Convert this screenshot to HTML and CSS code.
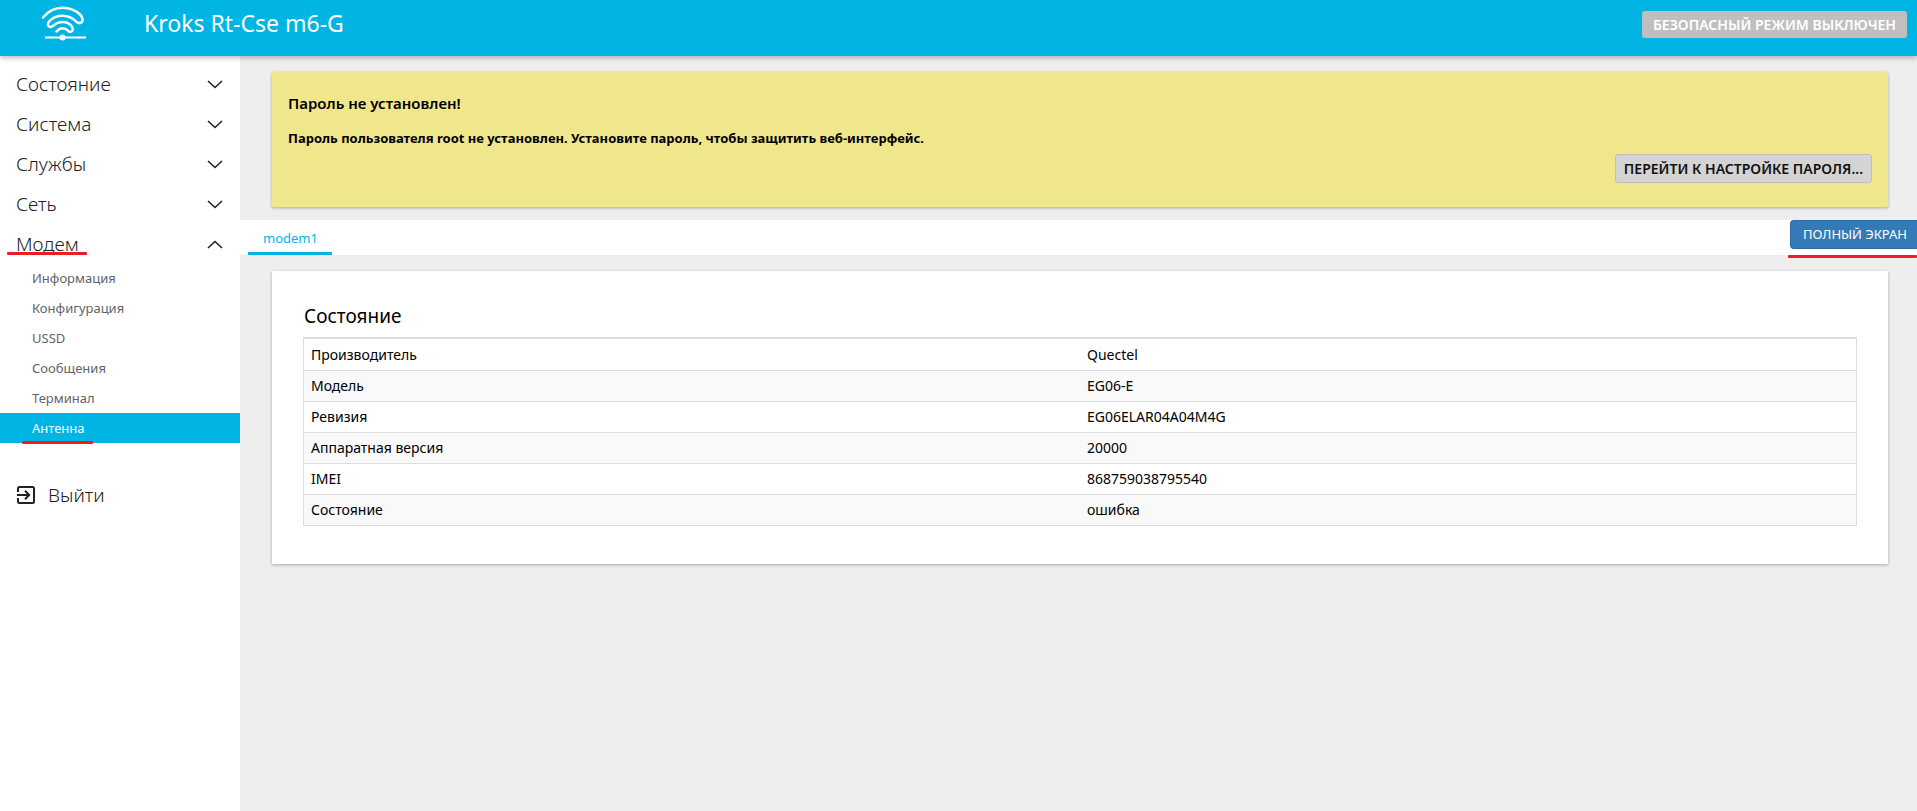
FILE: index.html
```html
<!DOCTYPE html>
<html lang="ru">
<head>
<meta charset="utf-8">
<title>Kroks Rt-Cse m6-G — Антенна</title>
<link rel="stylesheet" href="styles.css">
</head>
<body>
<svg class="sprite" aria-hidden="true">
  <symbol id="chevron" viewBox="0 0 16 9"><path d="M1 1l7 6.500 7-6.500" fill="none" stroke="currentColor" stroke-width="1.600"/></symbol>
</svg>
<header class="header">
  <svg class="logo" viewBox="0 0 46 36" aria-hidden="true">
    <path d="M2 11.500C7.500 5 14 1.800 21.500 1.800c7.500 0 13.500 2.700 18 7.200 2.500 2.600 2.800 5.800.800 7.400-1.500 1.200-3.300.800-5-.700C31.500 12 27 9.800 21.500 9.800c-5.500 0-10 2-13 5.200-2 2.200-2 4.500-.500 5.500 1.500 1 3 .300 4.500-.900 2.500-2.300 5.500-3.600 9-3.600 4 0 7.300 1.600 9.200 4.300 1.600 2.400 1.300 4.700-.500 5.400-1.300.500-2.500 0-3.500-1.300-1.400-1.500-3-2.200-5.200-2.200-2.400 0-4.300 1.100-6 3.300" fill="none" stroke="#fff" stroke-width="2.500" stroke-linecap="round" stroke-linejoin="round"/>
    <path d="M4 31.500h41" fill="none" stroke="#fff" stroke-width="2.200"/>
    <circle cx="21.500" cy="31.500" r="3" fill="#fff"/>
  </svg>
  <h1 class="title">Kroks Rt-Cse m6-G</h1>
  <button class="btn btn-safe" type="button">БЕЗОПАСНЫЙ РЕЖИМ ВЫКЛЮЧЕН</button>
</header>
<div class="layout">
  <nav class="sidebar">
    <ul class="menu">
      <li><a class="menu-link" href="#status">Состояние<svg class="chevron"><use href="#chevron"/></svg></a></li>
      <li><a class="menu-link" href="#system">Система<svg class="chevron"><use href="#chevron"/></svg></a></li>
      <li><a class="menu-link" href="#services">Службы<svg class="chevron"><use href="#chevron"/></svg></a></li>
      <li><a class="menu-link" href="#network">Сеть<svg class="chevron"><use href="#chevron"/></svg></a></li>
      <li>
        <a class="menu-link mark mark-modem" href="#modem">Модем<svg class="chevron chevron-open"><use href="#chevron"/></svg></a>
        <ul class="submenu">
          <li><a class="sub-link" href="#info">Информация</a></li>
          <li><a class="sub-link" href="#config">Конфигурация</a></li>
          <li><a class="sub-link" href="#ussd">USSD</a></li>
          <li><a class="sub-link" href="#sms">Сообщения</a></li>
          <li><a class="sub-link" href="#terminal">Терминал</a></li>
          <li><a class="sub-link active mark mark-antenna" href="#antenna">Антенна</a></li>
        </ul>
      </li>
    </ul>
    <a class="logout" href="#logout">
      <svg class="logout-icon" viewBox="0 0 18 18" aria-hidden="true"><path d="M1 6V2.500Q1 1 2.500 1h13Q17 1 17 2.500v13q0 1.500-1.500 1.500h-13Q1 17 1 15.500V12M0 9h12M8 4.800L12.200 9 8 13.200" fill="none" stroke="currentColor" stroke-width="2"/></svg>
      Выйти
    </a>
  </nav>
  <main class="content">
    <section class="alert">
      <h2 class="alert-title">Пароль не установлен!</h2>
      <p class="alert-text">Пароль пользователя root не установлен. Установите пароль, чтобы защитить веб-интерфейс.</p>
      <button class="btn btn-alert" type="button">ПЕРЕЙТИ К НАСТРОЙКЕ ПАРОЛЯ...</button>
    </section>
    <div class="tabs">
      <a class="tab" href="#modem1">modem1</a>
      <div class="mark mark-full"><button class="btn btn-full" type="button">ПОЛНЫЙ ЭКРАН</button></div>
    </div>
    <section class="card">
      <h2 class="card-title">Состояние</h2>
      <table class="table">
        <tbody>
          <tr><th scope="row">Производитель</th><td>Quectel</td></tr>
          <tr><th scope="row">Модель</th><td>EG06-E</td></tr>
          <tr><th scope="row">Ревизия</th><td>EG06ELAR04A04M4G</td></tr>
          <tr><th scope="row">Аппаратная версия</th><td>20000</td></tr>
          <tr><th scope="row">IMEI</th><td>868759038795540</td></tr>
          <tr><th scope="row">Состояние</th><td>ошибка</td></tr>
        </tbody>
      </table>
    </section>
  </main>
</div>
</body>
</html>
```

FILE: styles.css
```css
* { box-sizing: border-box; }

body {
  margin: 0;
  min-height: 100vh;
  display: flex;
  flex-direction: column;
  overflow-x: hidden;
  background: #eee;
  color: #000;
  font: 14px/20px "Noto Sans", "Open Sans", sans-serif;
}

a { text-decoration: none; }
ul { margin: 0; padding: 0; list-style: none; }
h1, h2, p { margin: 0; }
.sprite { display: none; }

.header {
  position: relative;
  z-index: 1;
  display: flex;
  align-items: flex-start;
  height: 56px;
  padding: 0 10px 0 41px;
  background: #00b5e4;
  box-shadow: 0 2px 5px rgba(0, 0, 0, .26);
}
.logo { width: 46px; height: 36px; margin-top: 6px; }
.title {
  margin: 7px auto 0 57px;
  color: #fff;
  font-size: 23px;
  font-weight: 400;
  line-height: 32px;
}

.btn {
  border: 1px solid transparent;
  border-radius: 3px;
  font-family: inherit;
  font-size: 14px;
  font-weight: 600;
  white-space: nowrap;
}
.btn-safe {
  height: 27px;
  margin-top: 11px;
  padding: 0 10px;
  background: #bfbfbf;
  color: #fff;
}

.layout { display: flex; flex: 1; }

.sidebar {
  flex: 0 0 240px;
  padding-top: 8px;
  background: #fff;
}
.menu-link {
  display: flex;
  align-items: center;
  justify-content: space-between;
  height: 40px;
  padding: 0 17px 0 16px;
  color: #202124;
  font-size: 19px;
  font-weight: 300;
}
.chevron { width: 16px; height: 9px; }
.chevron-open { transform: rotate(180deg); }
.submenu { margin-top: -1px; }
.sub-link {
  display: flex;
  align-items: center;
  height: 30px;
  padding-left: 32px;
  color: #5f6368;
  font-size: 13px;
}
.sub-link.active { background: #00b5e4; color: #fff; }
.logout {
  display: flex;
  align-items: center;
  gap: 13px;
  height: 40px;
  margin-top: 32px;
  padding-left: 17px;
  color: #202124;
  font-size: 19px;
  font-weight: 300;
}
.logout-icon { width: 18px; height: 18px; }

/* Red underlines that point at an element */
.mark { position: relative; }
.mark::after {
  content: "";
  position: absolute;
  height: 3px;
  border-radius: 1px;
  background: #ed1c24;
}
.mark-modem::after { left: 7px; bottom: 9px; width: 80px; }
.mark-antenna::after { left: 22px; bottom: -1px; width: 71px; }
.mark-full::after { left: -2px; right: 0; bottom: -3px; }

.content { flex: 1; min-width: 0; }

.alert {
  display: flex;
  flex-direction: column;
  margin: 16px 29px 13px 32px;
  padding: 21px 16px 24px;
  background: #f0e68c;
  font-weight: 700;
  box-shadow: 0 1px 3px rgba(0, 0, 0, .3);
}
.alert-title { font-size: 15px; font-weight: 600; line-height: 20px; }
.alert-text { margin-top: 15px; font-size: 13px; line-height: 20px; }
.btn-alert {
  align-self: flex-end;
  height: 29px;
  margin-top: 6px;
  padding: 0 8px;
  border-color: #bfbfbf;
  background: #d4d4d4;
  color: #111;
}

.tabs {
  display: flex;
  justify-content: space-between;
  height: 35px;
  padding-left: 8px;
  background: #fff;
}
.tab {
  padding: 8px 14px 0 15px;
  border-bottom: 3px solid #00b5e4;
  color: #00b5e4;
  font-size: 13px;
}
.btn-full {
  height: 29px;
  padding: 0 10px 2px 12px;
  border-color: #2e6da4;
  border-right: 0;
  border-radius: 4px 0 0 4px;
  background: #337ab7;
  color: #fff;
  font-size: 13px;
  font-weight: 400;
}

.card {
  margin: 16px 29px 16px 32px;
  padding: 31px 31px 38px;
  background: #fff;
  box-shadow: 0 1px 3px rgba(0, 0, 0, .3);
}
.card-title {
  padding-left: 1px;
  font-size: 19px;
  font-weight: 400;
  line-height: 28px;
}
.table {
  width: 100%;
  margin-top: 7px;
  border: 1px solid #ddd;
  border-top-width: 2px;
  border-spacing: 0;
  table-layout: fixed;
}
.table tr { height: 31px; }
.table th,
.table td {
  padding: 5px 7px;
  font-weight: 400;
  text-align: left;
}
.table tr + tr > * { border-top: 1px solid #ddd; }
.table tr:nth-child(even) { background: #f9f9f9; }
```
